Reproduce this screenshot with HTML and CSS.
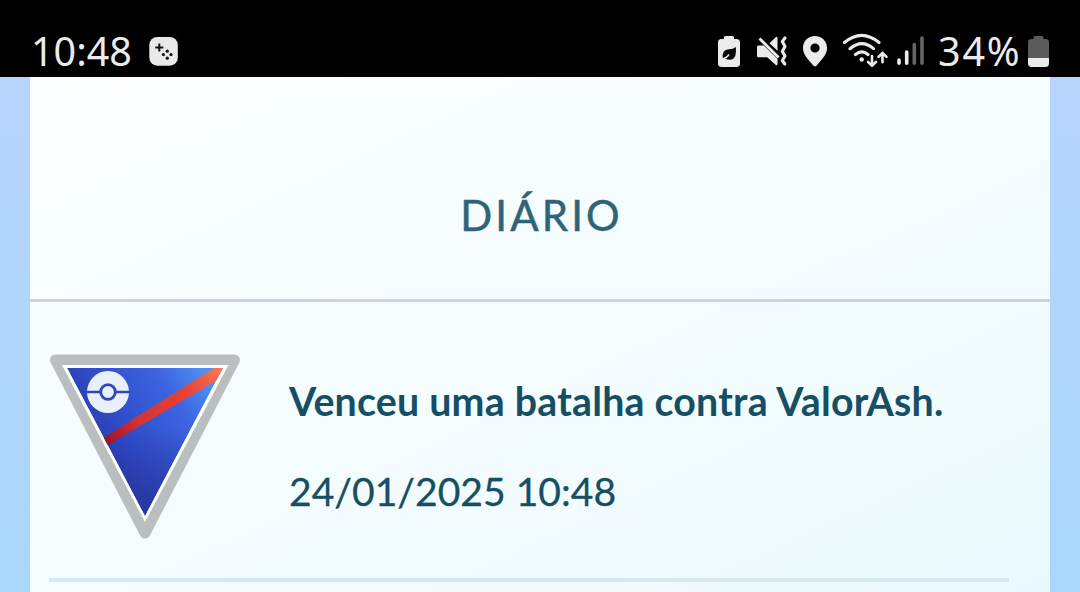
FILE: index.html
```html
<!DOCTYPE html>
<html lang="pt-BR">
<head>
<meta charset="utf-8">
<title>Diário</title>
<link rel="stylesheet" href="styles.css">
</head>
<body>
<header class="status">
  <span class="clock">10:48</span>
  <svg class="game" width="30" height="30" viewBox="149 36 30 30">
    <rect x="149.3" y="37" width="28.5" height="28.7" rx="8" fill="#e9e9e9"/>
    <path d="M159.3 43.5v8M155.3 47.5h8" stroke="#111" stroke-width="2"/>
    <g fill="#111"><circle cx="167.3" cy="51.2" r="1.6"/><circle cx="163.4" cy="54.6" r="1.6"/><circle cx="171" cy="54.6" r="1.6"/><circle cx="167.3" cy="58.2" r="1.6"/></g>
  </svg>
  <svg class="indicators" width="210" height="46" viewBox="716 28 210 46">
    <g fill="#ebebeb">
      <path d="M724 39v-1.5q0-1.5 1.500-1.500h7q1.500 0 1.500 1.500V39h2.500q3.500 0 3.500 3.500v20.700q0 3.800-3.500 3.800h-15q-3.500 0-3.500-3.800V42.500q0-3.500 3.500-3.500z"/>
      <path d="M758.500 45.500h5.200l13.800 13.600v4.800q0 2.300-2 .8l-8.300-7.500h-8.700q-1.500 0-1.500-1.500v-8.700q0-1.500 1.500-1.500zM769.500 43.200l6.200-6q1.800-1.500 1.800 1v12.500z"/>
    </g>
    <path d="M722.800 58.500q-1.200-9 6-9.200 4.500 0 7-2.300 1.200 12.500-5.800 12.800-3.100 0-4.500-1.500-2.200 0-4.400.9z" fill="#080808"/>
    <path d="M721.500 59q4.600-.5 7.500-4.500" fill="none" stroke="#ebebeb" stroke-width="1.500"/>
    <path d="M759.500 38.500l19 19" stroke="#ebebeb" stroke-width="2.800"/>
    <path d="M785 38l-2.700 3.500 2.700 5-2.700 5 2.700 4.500-2.700 4.500 2.500 3.500" fill="none" stroke="#ebebeb" stroke-width="3.100" stroke-linejoin="round" stroke-linecap="round"/>
    <path fill-rule="evenodd" fill="#ebebeb" d="M815 36c-7 0-12 5.200-12 12 0 6 3.800 10.300 10.300 17.400q1.700 1.700 3.400 0C823.200 58.300 827 54 827 48c0-6.800-5-12-12-12zm0 7.400a4.600 4.600 0 1 1 0 9.200 4.600 4.600 0 0 1 0-9.200z"/>
    <g fill="none" stroke="#ebebeb" stroke-width="3.100" stroke-linecap="round">
      <path d="M844.500 42.500q17.200-14.200 34.500 0M850 48.700q12-10.200 23.500 0M855.500 54.500q6.300-5.200 12.500 0"/>
      <path d="M872 56v9.500m-4-3.700l4 4 4-4M882.500 62.300v-8.800m-4 3.400l4-4 4 4" stroke-width="2.600" stroke-linejoin="round"/>
    </g>
    <circle cx="861.700" cy="59.500" r="2.200" fill="#ebebeb"/>
    <g stroke-width="3.600" stroke-linecap="round"><path d="M899 60v3.300M906.700 52v11.300" stroke="#ebebeb"/><path d="M914.300 44.500v18.800M922 38v25.300" stroke="#666"/></g>
  </svg>
  <span class="percent">34%</span>
  <svg class="battery" width="24" height="34" viewBox="1027 35 24 34">
    <path d="M1033.500 39v-1.500q0-1.500 1.500-1.500h7q1.500 0 1.500 1.500V39h2q3.500 0 3.500 3.500V58h-21V42.500q0-3.500 3.500-3.500z" fill="#5b5b5b"/>
    <path d="M1028 58h21v5q0 4-3.500 4h-14q-3.500 0-3.500-4z" fill="#ebebeb"/>
  </svg>
</header>
<main class="journal">
  <h1 class="title">DIÁRIO</h1>
  <article class="entry">
    <svg class="emblem" width="194" height="190" viewBox="48 352 194 190">
      <defs>
        <linearGradient id="field" x1="92" y1="440" x2="205" y2="370" gradientUnits="userSpaceOnUse"><stop offset="0" stop-color="#2c3cac"/><stop offset=".25" stop-color="#2f4cc7"/><stop offset=".7" stop-color="#3d65e2"/><stop offset="1" stop-color="#4d91f5"/></linearGradient>
        <linearGradient id="shade" x1="0" y1="430" x2="0" y2="516" gradientUnits="userSpaceOnUse"><stop offset="0" stop-color="#27369e" stop-opacity="0"/><stop offset="1" stop-color="#27369e" stop-opacity=".85"/></linearGradient>
        <linearGradient id="stripe" x1="106" y1="440" x2="222" y2="370" gradientUnits="userSpaceOnUse"><stop offset="0" stop-color="#9b1428"/><stop offset=".28" stop-color="#d63336"/><stop offset=".7" stop-color="#e64437"/><stop offset="1" stop-color="#fa7857"/></linearGradient>
        <clipPath id="inside"><path d="M67 368H223L145 516Z"/></clipPath>
      </defs>
      <path d="M55.500 360H234.500L145 533Z" fill="#b9bfbf" stroke="#b9bfbf" stroke-width="11" stroke-linejoin="round"/>
      <path d="M62 365H228.500L145 522Z" fill="#fff"/>
      <g clip-path="url(#inside)">
        <path d="M67 368H223L145 516Z" fill="url(#field)"/>
        <path d="M67 368H223L145 516Z" fill="url(#shade)"/>
        <path d="M100 440L214 368H228L218 379.500L103 448Z" fill="url(#stripe)"/>
      </g>
      <circle cx="108" cy="392" r="21" fill="#e9f0fa"/>
      <path d="M86 392h44" stroke="#2e48bd" stroke-width="2.500"/>
      <circle cx="108" cy="392" r="7.300" fill="#e9f0fa" stroke="#2e48bd" stroke-width="2.800"/>
    </svg>
    <div class="details">
      <p class="event">Venceu uma batalha contra ValorAsh.</p>
      <time class="date">24/01/2025 10:48</time>
    </div>
  </article>
</main>
</body>
</html>
```

FILE: styles.css
```css
* { box-sizing: border-box; }
body {
  margin: 0;
  width: 1080px;
  height: 592px;
  overflow: hidden;
  background: linear-gradient(#b9d3fc, #a9d7f9);
  font-family: Lato, sans-serif;
}
.status {
  display: flex;
  align-items: flex-start;
  height: 77px;
  background: #000;
  color: #ebebeb;
  font: 400 39.5px/56px "Noto Sans", sans-serif;
}
.clock {
  width: 118px;
  margin: 23px 0 0 31px;
  white-space: nowrap;
}
.game { margin-top: 36px; }
.indicators { margin: 28px 0 0 537px; }
.percent {
  width: 89px;
  margin: 23px 0 0 12px;
  letter-spacing: 1.8px;
}
.battery { margin-top: 35px; }
.journal {
  height: 515px;
  margin: 0 30px;
  background: linear-gradient(155deg, #fcffff 0%, #f4fcff 50%, #f1fbfe 75%, #e8f9fd 100%);
}
.title {
  height: 225px;
  margin: 0;
  padding: 112px 0 0 3px;
  border-bottom: 3px solid #cdd1e1;
  color: #316377;
  font-size: 42px;
  font-weight: 400;
  line-height: 52px;
  letter-spacing: 3.1px;
  text-align: center;
  -webkit-text-stroke: .5px #316377;
}
.entry {
  display: flex;
  width: 960px;
  height: 280px;
  margin-left: 19px;
  padding-top: 50px;
  border-bottom: 4px solid #d5e8ef;
}
.emblem { margin-left: -1px; flex: none; }
.details {
  padding-left: 47px;
  color: #164f63;
  font-size: 39.3px;
  line-height: 50px;
  white-space: nowrap;
}
.event {
  margin: 24px 0 40px;
  font-weight: 700;
  letter-spacing: .23px;
}
.date {
  display: block;
  font-size: 39.1px;
  -webkit-text-stroke: .3px #164f63;
}
```
